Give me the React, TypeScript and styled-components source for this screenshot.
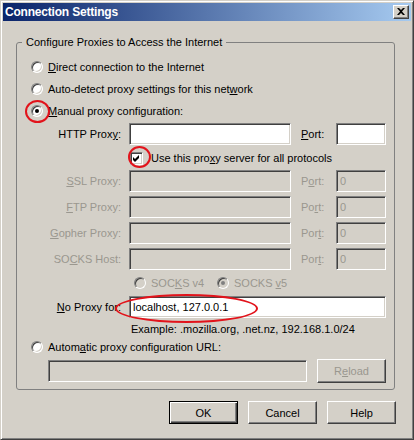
import React from "react";
import styled, { createGlobalStyle, css } from "styled-components";

const FACE = "#d4d0c8";
const HILITE = "#ffffff";
const SHADOW = "#808080";
const DARK = "#404040";
const GRAY = "#9a978f";
const RED = "#e2131b";

const GlobalStyle = createGlobalStyle`
  * { box-sizing: border-box; }
  html, body { margin: 0; padding: 0; background: ${FACE}; }
  body {
    font-family: "Liberation Sans", Arial, sans-serif;
    font-size: 11px;
    color: #000;
  }
`;

const Window = styled.div`
  width: 414px;
  height: 440px;
  background: ${FACE};
  border: 1px solid;
  border-color: ${FACE} ${DARK} ${DARK} ${FACE};
  box-shadow: inset 1px 1px ${HILITE}, inset -1px -1px ${SHADOW};
  padding: 2px;
  display: flex;
  flex-direction: column;
`;

const TitleBar = styled.div`
  flex: none;
  height: 18px;
  background: linear-gradient(to right, #0a246a, #a6caf0);
  display: flex;
  align-items: center;
  justify-content: space-between;
  padding: 0 2px;
`;

const TitleText = styled.span`
  color: #fff;
  font-weight: bold;
  font-size: 12px;
  letter-spacing: -0.2px;
  line-height: 18px;
  white-space: nowrap;
`;

const CloseButton = styled.div`
  width: 16px;
  height: 14px;
  background: ${FACE};
  border: 1px solid;
  border-color: ${HILITE} ${DARK} ${DARK} ${HILITE};
  box-shadow: inset -1px -1px ${SHADOW};
  display: flex;
  align-items: center;
  justify-content: center;
  padding-bottom: 2px;
`;

const Body = styled.div`
  flex: 1;
  display: flex;
  flex-direction: column;
  padding: 15px 16px 0 13px;
`;

const Group = styled.fieldset`
  margin: 0;
  min-width: 0;
  padding: 7px 8px 6px 14px;
  border: 1px solid ${SHADOW};
  border-radius: 3px;
  display: flex;
  flex-direction: column;
`;

const Legend = styled.legend`
  padding: 0 4px;
  margin-left: -9px;
  line-height: 13px;
  font-size: 11px;
`;

const Key = styled.span`
  text-decoration: underline;
`;

const RadioRow = styled.div`
  height: 22px;
  display: flex;
  align-items: center;
  gap: 5px;
  white-space: nowrap;
`;

const SocksRow = styled.div`
  height: 22px;
  margin-top: 2px;
  padding-left: 103px;
  display: flex;
  align-items: center;
  white-space: nowrap;
`;

const RadioMark = styled.span<{ $checked?: boolean; $disabled?: boolean }>`
  position: relative;
  flex: none;
  width: 12px;
  height: 12px;
  border-radius: 50%;
  border: 1px solid;
  border-color: ${SHADOW} ${HILITE} ${HILITE} ${SHADOW};
  box-shadow: inset 1px 1px ${DARK}, inset -1px -1px ${FACE};
  background: ${(p) => (p.$disabled ? FACE : "#fff")};
  ${(p) =>
    p.$checked &&
    css`
      &::after {
        content: "";
        position: absolute;
        left: 3px;
        top: 3px;
        width: 4px;
        height: 4px;
        border-radius: 50%;
        background: ${p.$disabled ? SHADOW : "#000"};
      }
    `}
`;

const OptionText = styled.span<{ $disabled?: boolean }>`
  color: ${(p) => (p.$disabled ? GRAY : "#000")};
`;

const SocksOption = styled.span<{ $width?: number }>`
  display: flex;
  align-items: center;
  gap: 5px;
  width: ${(p) => (p.$width ? `${p.$width}px` : "auto")};
`;

const ProxyRow = styled.div<{ $mt?: number }>`
  height: 22px;
  margin-top: ${(p) => p.$mt ?? 0}px;
  display: flex;
  align-items: center;
  white-space: nowrap;
`;

const FieldLabel = styled.label<{ $disabled?: boolean }>`
  flex: none;
  width: 90px;
  margin-right: 8px;
  text-align: right;
  color: ${(p) => (p.$disabled ? GRAY : "#000")};
`;

const PortLabel = styled.label<{ $disabled?: boolean }>`
  flex: none;
  width: 35px;
  margin-left: 10px;
  color: ${(p) => (p.$disabled ? GRAY : "#000")};
`;

const TextField = styled.input<{ $width?: number }>`
  flex: ${(p) => (p.$width ? "none" : "1")};
  width: ${(p) => (p.$width ? `${p.$width}px` : "auto")};
  min-width: 0;
  height: 22px;
  margin: 0;
  padding: 0 3px;
  font-family: inherit;
  font-size: 11px;
  color: #000;
  background: #fff;
  border: 1px solid;
  border-color: ${SHADOW} ${HILITE} ${HILITE} ${SHADOW};
  box-shadow: inset 1px 1px ${DARK}, inset -1px -1px ${FACE};
  outline: none;
  &:disabled {
    background: ${FACE};
    color: ${GRAY};
  }
`;

const FieldAnchor = styled.span`
  position: relative;
  flex: 1;
  display: flex;
`;

const CheckRow = styled.div`
  height: 25px;
  padding-left: 99px;
  display: flex;
  align-items: center;
  gap: 8px;
  white-space: nowrap;
`;

const CheckBox = styled.span`
  position: relative;
  flex: none;
  width: 13px;
  height: 13px;
  margin-top: 1px;
  background: #fff;
  border: 1px solid;
  border-color: ${SHADOW} ${HILITE} ${HILITE} ${SHADOW};
  box-shadow: inset 1px 1px ${DARK}, inset -1px -1px ${FACE};
  display: flex;
  align-items: center;
  justify-content: center;
`;

const ExampleText = styled.div`
  height: 13px;
  margin-top: 5px;
  padding-left: 100px;
  line-height: 13px;
  white-space: nowrap;
`;

const UrlRow = styled.div`
  height: 24px;
  margin-top: 1px;
  padding-left: 17px;
  display: flex;
  align-items: center;
  gap: 10px;
`;

const PushButton = styled.button<{ $default?: boolean }>`
  flex: none;
  width: 69px;
  height: 23px;
  margin: 0;
  padding: 0;
  font-family: inherit;
  font-size: 11px;
  color: #000;
  background: ${FACE};
  border: 1px solid;
  border-color: ${HILITE} ${DARK} ${DARK} ${HILITE};
  box-shadow: inset -1px -1px ${SHADOW}, inset 1px 1px ${FACE};
  ${(p) =>
    p.$default &&
    css`
      border-color: #000;
      box-shadow: inset 1px 1px ${HILITE}, inset -1px -1px ${DARK},
        inset -2px -2px ${SHADOW};
    `}
  &:disabled {
    color: ${GRAY};
  }
`;

const ReloadButton = styled(PushButton)`
  height: 24px;
`;

const ButtonBar = styled.div`
  margin-top: 11px;
  margin-right: -1px;
  display: flex;
  justify-content: flex-end;
  gap: 10px;
`;

const Ring = styled.span<{ $l: number; $t: number; $w: number; $h: number }>`
  position: absolute;
  left: ${(p) => p.$l}px;
  top: ${(p) => p.$t}px;
  width: ${(p) => p.$w}px;
  height: ${(p) => p.$h}px;
  border: 2.5px solid ${RED};
  border-radius: 50%;
  pointer-events: none;
  z-index: 2;
`;

const CloseGlyph = () => (
  <svg width="8" height="7" viewBox="0 0 8 7">
    <path d="M0 0h2l2 2 2-2h2L5 3.5 8 7H6L4 5 2 7H0l3-3.5z" fill="#000" />
  </svg>
);

const CheckGlyph = () => (
  <svg width="7" height="7" viewBox="0 0 7 7">
    <polygon points="0,2 2,4 6,0 6,3 2,7 0,5" fill="#000" />
  </svg>
);

type ProxyDef = { label: React.ReactNode; port: React.ReactNode; mt: number };

const disabledProxies: ProxyDef[] = [
  { label: <><Key>S</Key>SL Proxy:</>, port: <>P<Key>o</Key>rt:</>, mt: 0 },
  { label: <><Key>F</Key>TP Proxy:</>, port: <>Po<Key>r</Key>t:</>, mt: 4 },
  { label: <><Key>G</Key>opher Proxy:</>, port: <>Por<Key>t</Key>:</>, mt: 4 },
  { label: <>SO<Key>C</Key>KS Host:</>, port: <>Por<Key>t</Key>:</>, mt: 4 },
];

export default function App() {
  return (
    <>
      <GlobalStyle />
      <Window>
        <TitleBar>
          <TitleText>Connection Settings</TitleText>
          <CloseButton>
            <CloseGlyph />
          </CloseButton>
        </TitleBar>
        <Body>
          <Group>
            <Legend>Configure Proxies to Access the Internet</Legend>
            <RadioRow>
              <RadioMark />
              <OptionText>
                <Key>D</Key>irect connection to the Internet
              </OptionText>
            </RadioRow>
            <RadioRow>
              <RadioMark />
              <OptionText>
                Auto-detect proxy settings for this net<Key>w</Key>ork
              </OptionText>
            </RadioRow>
            <RadioRow>
              <RadioMark $checked>
                <Ring $l={-7} $t={-6} $w={25} $h={23} />
              </RadioMark>
              <OptionText>
                <Key>M</Key>anual proxy configuration:
              </OptionText>
            </RadioRow>

            <ProxyRow $mt={1}>
              <FieldLabel>
                HTTP Prox<Key>y</Key>:
              </FieldLabel>
              <TextField $width={162} defaultValue="" />
              <PortLabel>
                <Key>P</Key>ort:
              </PortLabel>
              <TextField $width={50} defaultValue="" />
            </ProxyRow>

            <CheckRow>
              <CheckBox>
                <CheckGlyph />
                <Ring $l={-3} $t={-7} $w={23} $h={22} />
              </CheckBox>
              <OptionText>
                Use this pro<Key>x</Key>y server for all protocols
              </OptionText>
            </CheckRow>

            {disabledProxies.map((p, i) => (
              <ProxyRow key={i} $mt={p.mt}>
                <FieldLabel $disabled>{p.label}</FieldLabel>
                <TextField $width={162} disabled defaultValue="" />
                <PortLabel $disabled>{p.port}</PortLabel>
                <TextField $width={50} disabled defaultValue="0" />
              </ProxyRow>
            ))}

            <SocksRow>
              <SocksOption $width={83}>
                <RadioMark $disabled />
                <OptionText $disabled>
                  SOC<Key>K</Key>S v4
                </OptionText>
              </SocksOption>
              <SocksOption>
                <RadioMark $disabled $checked />
                <OptionText $disabled>
                  SOCKS <Key>v</Key>5
                </OptionText>
              </SocksOption>
            </SocksRow>

            <ProxyRow $mt={2}>
              <FieldLabel>
                <Key>N</Key>o Proxy for:
              </FieldLabel>
              <FieldAnchor>
                <TextField defaultValue="localhost, 127.0.0.1" />
                <Ring $l={-14} $t={-2} $w={143} $h={29} />
              </FieldAnchor>
            </ProxyRow>

            <ExampleText>Example: .mozilla.org, .net.nz, 192.168.1.0/24</ExampleText>

            <RadioRow>
              <RadioMark />
              <OptionText>
                Autom<Key>a</Key>tic proxy configuration URL:
              </OptionText>
            </RadioRow>

            <UrlRow>
              <TextField disabled defaultValue="" />
              <ReloadButton disabled>
                R<Key>e</Key>load
              </ReloadButton>
            </UrlRow>
          </Group>

          <ButtonBar>
            <PushButton $default>OK</PushButton>
            <PushButton>Cancel</PushButton>
            <PushButton>Help</PushButton>
          </ButtonBar>
        </Body>
      </Window>
    </>
  );
}
